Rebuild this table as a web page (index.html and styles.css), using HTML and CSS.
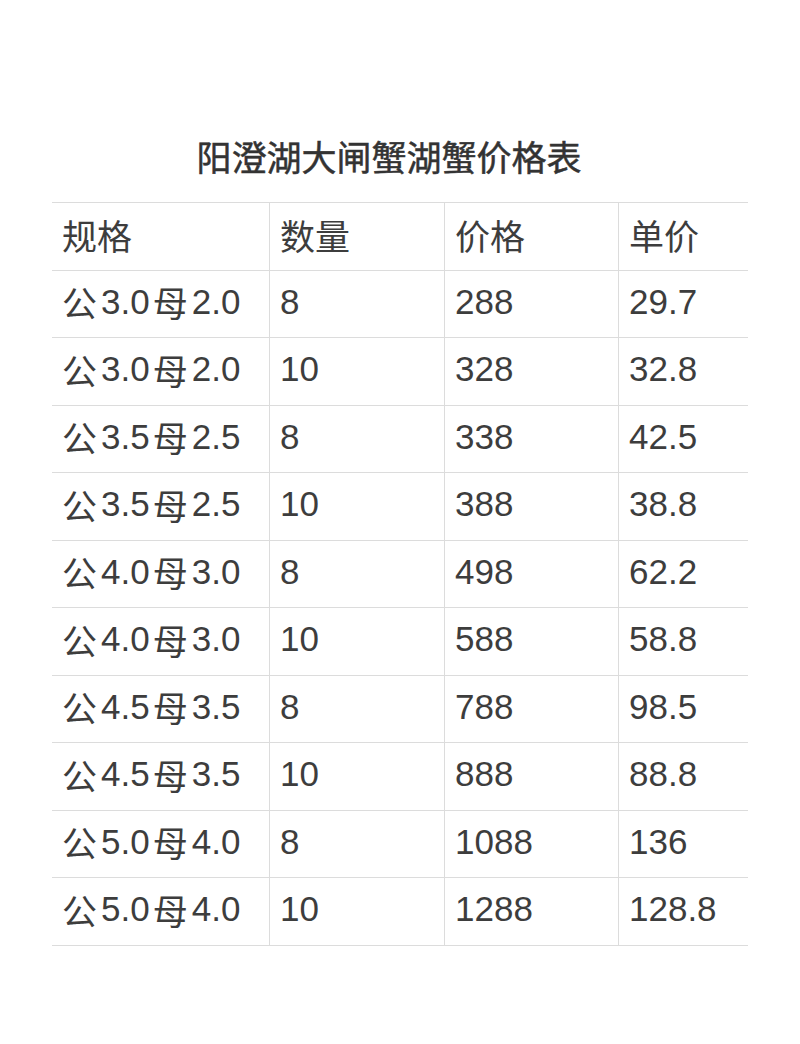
FILE: index.html
```html
<!DOCTYPE html>
<html lang="zh">
<head>
<meta charset="utf-8">
<link rel="stylesheet" href="styles.css">
</head>
<body>
<div class="page">
  <h1 class="title">阳澄湖大闸蟹湖蟹价格表</h1>
  <div class="table">
    <div class="cell">规格</div><div class="cell">数量</div><div class="cell">价格</div><div class="cell last">单价</div>
    <div class="cell">公<span class="n">3.0</span>母<span class="n">2.0</span></div><div class="cell">8</div><div class="cell">288</div><div class="cell last">29.7</div>
    <div class="cell">公<span class="n">3.0</span>母<span class="n">2.0</span></div><div class="cell">10</div><div class="cell">328</div><div class="cell last">32.8</div>
    <div class="cell">公<span class="n">3.5</span>母<span class="n">2.5</span></div><div class="cell">8</div><div class="cell">338</div><div class="cell last">42.5</div>
    <div class="cell">公<span class="n">3.5</span>母<span class="n">2.5</span></div><div class="cell">10</div><div class="cell">388</div><div class="cell last">38.8</div>
    <div class="cell">公<span class="n">4.0</span>母<span class="n">3.0</span></div><div class="cell">8</div><div class="cell">498</div><div class="cell last">62.2</div>
    <div class="cell">公<span class="n">4.0</span>母<span class="n">3.0</span></div><div class="cell">10</div><div class="cell">588</div><div class="cell last">58.8</div>
    <div class="cell">公<span class="n">4.5</span>母<span class="n">3.5</span></div><div class="cell">8</div><div class="cell">788</div><div class="cell last">98.5</div>
    <div class="cell">公<span class="n">4.5</span>母<span class="n">3.5</span></div><div class="cell">10</div><div class="cell">888</div><div class="cell last">88.8</div>
    <div class="cell">公<span class="n">5.0</span>母<span class="n">4.0</span></div><div class="cell">8</div><div class="cell">1088</div><div class="cell last">136</div>
    <div class="cell">公<span class="n">5.0</span>母<span class="n">4.0</span></div><div class="cell">10</div><div class="cell">1288</div><div class="cell last">128.8</div>
  </div>
</div>
</body>
</html>
```
FILE: styles.css
```css
html, body {
  margin: 0;
  padding: 0;
  background: #ffffff;
}
.page {
  width: 800px;
  height: 1044px;
  padding-top: 132px;
  box-sizing: border-box;
  font-family: "Liberation Sans", "Noto Sans CJK SC", sans-serif;
  color: #3a3a3a;
}
.title {
  margin: 0;
  padding-right: 22px;
  height: 70px;
  font-size: 35px;
  line-height: 48px;
  font-weight: 400;
  text-align: center;
  font-family: "Noto Sans CJK SC", sans-serif;
  color: #333333;
  -webkit-text-stroke: 0.5px #333333;
}
.table {
  margin-left: 52px;
  width: 696px;
  display: grid;
  grid-template-columns: 218px 175px 174px 129px;
  grid-auto-rows: 67.5px;
  border-top: 1px solid #dcdcdc;
}
.cell {
  box-sizing: border-box;
  border-bottom: 1px solid #dcdcdc;
  border-right: 1px solid #dcdcdc;
  padding-left: 10px;
  padding-bottom: 4px;
  display: flex;
  align-items: center;
  font-size: 35px;
  color: #3d3d3d;
  white-space: nowrap;
}
.cell .n {
  margin: 0 3px 0 4px;
}
.cell.last {
  border-right: none;
}
```
